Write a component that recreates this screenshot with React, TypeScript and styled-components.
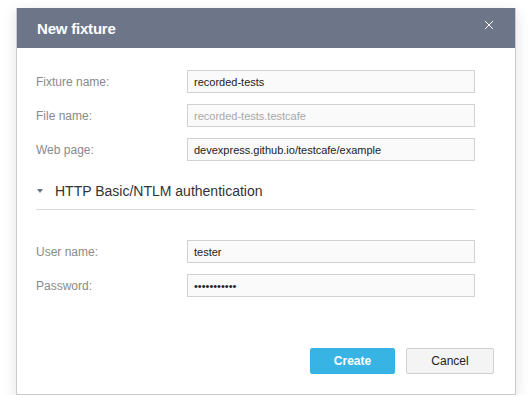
import styled, { createGlobalStyle } from 'styled-components'

const GlobalStyle = createGlobalStyle`
  body {
    margin: 0;
    background: #ffffff;
    font-family: "Liberation Sans", Arial, sans-serif;
  }
`

const Dialog = styled.div`
  width: 500px;
  margin: 8px 0 0 16px;
  background: #fff;
  border: 1px solid #c9cbd0;
  border-top: none;
  box-shadow: 0 4px 14px rgba(0, 0, 0, 0.12);
  box-sizing: border-box;
`

const Header = styled.div`
  height: 40px;
  background: #6d7588;
  display: flex;
  align-items: center;
  justify-content: space-between;
  padding: 0 20px 0 20px;
`

const Title = styled.h2`
  margin: 0;
  color: #fff;
  font-size: 15px;
  font-weight: bold;
  letter-spacing: -0.2px;
`

const Close = styled.button`
  border: none;
  background: none;
  padding: 0;
  width: 10px;
  height: 10px;
  margin-top: -7px;
  margin-right: 1px;
  display: flex;
  cursor: pointer;
`

const Body = styled.div`
  padding: 22px 40px 20px 19px;
`

const Fields = styled.div`
  display: grid;
  grid-template-columns: 151px 288px;
  row-gap: 11px;
  align-items: center;
`

const Label = styled.label`
  font-size: 12px;
  color: #8a8a8a;
`

const Input = styled.input`
  height: 23px;
  box-sizing: border-box;
  border: 1px solid #d2d2d2;
  background: #fafafa;
  padding: 0 6px;
  font-family: inherit;
  font-size: 11px;
  color: #222;
  outline: none;
  &:disabled {
    color: #a8a8a8;
  }
`

const Section = styled.div`
  display: flex;
  align-items: center;
  gap: 12px;
  height: 34px;
  margin-top: 13px;
  padding-left: 1px;
  border-bottom: 1px solid #d9d9d9;
  padding-bottom: 1px;
  font-size: 14px;
  color: #333;
  margin-bottom: 30px;
`

const Arrow = styled.span`
  width: 0;
  height: 0;
  border-left: 3px solid transparent;
  border-right: 3px solid transparent;
  border-top: 4px solid #6d7588;
`

const Footer = styled.div`
  display: flex;
  justify-content: flex-end;
  gap: 11px;
  padding: 0 21px 20px 0;
  margin-top: 31px;
`

const Button = styled.button<{ $primary?: boolean }>`
  height: 26px;
  width: ${({ $primary }) => ($primary ? '85px' : '88px')};
  border-radius: 2px;
  font-family: inherit;
  font-size: 12px;
  font-weight: ${({ $primary }) => ($primary ? 'bold' : 'normal')};
  color: ${({ $primary }) => ($primary ? '#fff' : '#222')};
  background: ${({ $primary }) => ($primary ? '#37b4e4' : '#f4f4f4')};
  border: 1px solid ${({ $primary }) => ($primary ? '#37b4e4' : '#d0d0d0')};
`

const App = () => {
  return (
    <>
      <GlobalStyle />
      <Dialog>
        <Header>
          <Title>New fixture</Title>
          <Close aria-label="close">
            <svg width="10" height="10" viewBox="0 0 10 10">
              <path d="M1 1L9 9M9 1L1 9" stroke="#fff" strokeWidth="1" />
            </svg>
          </Close>
        </Header>
        <Body>
          <Fields>
            <Label>Fixture name:</Label>
            <Input defaultValue="recorded-tests" />
            <Label>File name:</Label>
            <Input defaultValue="recorded-tests.testcafe" disabled />
            <Label>Web page:</Label>
            <Input defaultValue="devexpress.github.io/testcafe/example" />
          </Fields>
          <Section>
            <Arrow />
            HTTP Basic/NTLM authentication
          </Section>
          <Fields>
            <Label>User name:</Label>
            <Input defaultValue="tester" />
            <Label>Password:</Label>
            <Input type="password" defaultValue="12345678901" />
          </Fields>
        </Body>
        <Footer>
          <Button $primary>Create</Button>
          <Button>Cancel</Button>
        </Footer>
      </Dialog>
    </>
  )
}

export default App
